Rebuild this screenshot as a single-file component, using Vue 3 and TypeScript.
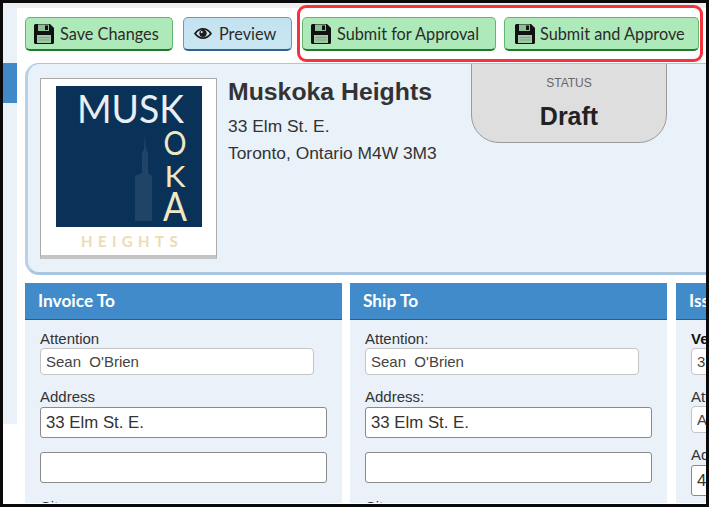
<script setup lang="ts">
const panels = [
  { title: 'Invoice To', attention: 'Attention', address: 'Address', city: 'City:' },
  { title: 'Ship To', attention: 'Attention:', address: 'Address:', city: 'City:' },
]
</script>

<template>
  <div class="frame">
    <div class="strip"></div>
    <div class="main">
      <aside class="side"><div class="side-active"></div></aside>
      <div class="content">
        <div class="toolbar">
          <button class="btn green save">
            <svg class="floppy" viewBox="0 0 22 22"><path d="M1 2.500A1.500 1.500 0 0 1 2.500 1H17l4 4v14.500a1.500 1.500 0 0 1-1.500 1.500H2.500A1.500 1.500 0 0 1 1 19.500Z" fill="#111"/><rect x="5" y="1.500" width="11" height="6.500" fill="#8fbf96"/><rect x="12" y="2.500" width="3" height="4.500" fill="#111"/><rect x="4" y="12" width="14" height="8" fill="#9fc9a5"/><path d="M5.500 14.500h11M5.500 17h11" stroke="#7ea686"/></svg>
            Save Changes
          </button>
          <button class="btn blue preview">
            <svg class="eye" viewBox="0 0 22 14"><path d="M1 7C4 2.800 7.500 1 11 1s7 1.800 10 6c-3 4.200-6.500 6-10 6S4 11.200 1 7Z" fill="#1d1d1d"/><path d="M3.500 7C5.500 4.500 7.500 3.300 9 2.900a5 5 0 0 0 4 0c1.700.500 3.700 1.600 5.500 4.100-2.200 2.700-4.700 4.200-7.500 4.200S5.700 9.700 3.500 7Z" fill="#cfe6f1"/><circle cx="11" cy="6.800" r="4" fill="#1d1d1d"/><circle cx="9.600" cy="5.400" r="1.200" fill="#cfe6f1"/></svg>
            Preview
          </button>
          <div class="highlight">
            <button class="btn green submit">
              <svg class="floppy" viewBox="0 0 22 22"><path d="M1 2.500A1.500 1.500 0 0 1 2.500 1H17l4 4v14.500a1.500 1.500 0 0 1-1.500 1.500H2.500A1.500 1.500 0 0 1 1 19.500Z" fill="#111"/><rect x="5" y="1.500" width="11" height="6.500" fill="#8fbf96"/><rect x="12" y="2.500" width="3" height="4.500" fill="#111"/><rect x="4" y="12" width="14" height="8" fill="#9fc9a5"/><path d="M5.500 14.500h11M5.500 17h11" stroke="#7ea686"/></svg>
              Submit for Approval
            </button>
            <button class="btn green approve">
              <svg class="floppy" viewBox="0 0 22 22"><path d="M1 2.500A1.500 1.500 0 0 1 2.500 1H17l4 4v14.500a1.500 1.500 0 0 1-1.500 1.500H2.500A1.500 1.500 0 0 1 1 19.500Z" fill="#111"/><rect x="5" y="1.500" width="11" height="6.500" fill="#8fbf96"/><rect x="12" y="2.500" width="3" height="4.500" fill="#111"/><rect x="4" y="12" width="14" height="8" fill="#9fc9a5"/><path d="M5.500 14.500h11M5.500 17h11" stroke="#7ea686"/></svg>
              Submit and Approve
            </button>
          </div>
        </div>

        <section class="card">
          <div class="logo-box">
            <svg class="logo" viewBox="0 0 175 175">
              <rect x="15" y="7" width="146" height="141" fill="#0a3157"/>
              <path d="M94 142V97l7-3V74l2-4 1-16 1 16 2 4v20l4 3v45Z" fill="#1f4468"/>
              <text x="36" y="44" class="musk" textLength="107" lengthAdjust="spacingAndGlyphs">MUSK</text>
              <text x="134" y="76" class="oka o" textLength="23" lengthAdjust="spacingAndGlyphs">O</text>
              <text x="134" y="108" class="oka k" textLength="21" lengthAdjust="spacingAndGlyphs">K</text>
              <text x="134" y="142" class="oka a" textLength="24" lengthAdjust="spacingAndGlyphs">A</text>
              <text x="91" y="168" class="heights">HEIGHTS</text>
            </svg>
          </div>
          <div class="info">
            <h1>Muskoka Heights</h1>
            <p>33 Elm St. E.</p>
            <p>Toronto, Ontario M4W 3M3</p>
          </div>
          <div class="status">
            <span>STATUS</span>
            <strong>Draft</strong>
          </div>
        </section>

        <div class="panels">
          <section v-for="p in panels" :key="p.title" class="panel">
            <h2>{{ p.title }}</h2>
            <div class="fields">
              <label>{{ p.attention }}</label>
              <input class="small" value="Sean  O'Brien" />
              <label class="gap">{{ p.address }}</label>
              <input class="big" value="33 Elm St. E." />
              <input class="big second" value="" />
              <label class="city">{{ p.city }}</label>
            </div>
          </section>
          <section class="panel issue">
            <h2>Issue</h2>
            <div class="fields">
              <label class="strong">Vendor</label>
              <input class="small" value="3" />
              <label class="gap">Attention</label>
              <input class="small" value="A" />
              <label class="gap">Address</label>
              <input class="big" value="4" />
            </div>
          </section>
        </div>
      </div>
    </div>
  </div>
</template>

<style>
html, body { margin: 0; background: #000; overflow: hidden; }
</style>

<style scoped>
.frame {
  box-sizing: border-box;
  width: 709px;
  height: 507px;
  border: 3px solid #0a0a0a;
  background: #fff;
  overflow: hidden;
  font-family: "Liberation Sans", Arial, sans-serif;
  color: #333;
}
.strip { height: 5px; background: #eeeeee; }
.main { display: flex; height: 496px; }
.side { width: 14px; flex: none; height: 416px; background: #eaf1f8; padding-top: 55px; box-sizing: border-box; }
.side-active { height: 40px; background: #4188c9; }
.content { margin-left: 8px; width: 690px; flex: none; }
.toolbar { display: flex; align-items: flex-start; height: 55px; }
.btn {
  box-sizing: border-box;
  height: 34px;
  margin-top: 9px;
  border-radius: 5px;
  display: flex;
  align-items: center;
  font-family: Lato, sans-serif;
  font-size: 16.300px;
  color: #2b2b2b;
  padding: 0 0 0 7px;
  white-space: nowrap;
  cursor: pointer;
}
.green { background: #aeeab9; border: 1px solid #62b56f; border-bottom: 2px solid #1f7a2b; }
.blue { background: linear-gradient(#c3e2f0, #cae6f2); border: 1px solid #6f97b8; border-bottom: 2px solid #33608f; }
.floppy { width: 22px; height: 22px; margin-right: 5px; flex: none; }
.eye { width: 20px; height: 13px; margin-right: 6px; flex: none; }
.save { width: 148px; }
.preview { width: 109px; margin-left: 10px; padding-left: 9px; }
.highlight {
  box-sizing: border-box;
  display: flex;
  gap: 8px;
  width: 406px;
  height: 57px;
  margin-left: 5px;
  margin-top: -3px;
  padding: 0 0 0 2px;
  border: 3px solid #f4333f;
  border-radius: 9px;
  background: #fff;
  position: relative;
  z-index: 1;
}
.submit { width: 194px; }
.approve { width: 195px; padding-left: 9px; }
.approve .floppy { margin-right: 4px; }

.card {
  box-sizing: border-box;
  display: flex;
  width: 700px;
  height: 212px;
  padding: 14px 0 0 12px;
  background: #e9f1f9;
  border: 1px solid #a9c6e0;
  border-bottom: 3px solid #a9c6e0;
  border-left: 3px solid #b9d1e7;
  border-radius: 14px 0 0 14px;
  overflow: hidden;
}
.logo-box {
  box-sizing: border-box;
  width: 177px;
  height: 181px;
  background: #fff;
  border: 1px solid #aaa;
  border-bottom: 4px solid #c4c4c4;
  flex: none;
}
.logo { display: block; width: 175px; height: 175px; }
.musk { font: 400 39px Lato, sans-serif; fill: #e8eef2; }
.oka { font: 400 32px Lato, sans-serif; fill: #f0e8c4; text-anchor: middle; }
.oka.k { font-size: 29px; }
.oka.a { font-size: 40px; }
.heights { font: 700 15px Lato, sans-serif; fill: #ecdcb4; text-anchor: middle; letter-spacing: 5.400px; }
.info { margin-left: 11px; width: 243px; flex: none; }
.info h1 { margin: -1px 0 6px; font-size: 24.800px; line-height: 30px; font-weight: 700; color: #333; }
.info p { margin: 0; font-size: 17.400px; line-height: 26.500px; color: #333; }
.status {
  box-sizing: border-box;
  flex: none;
  width: 196px;
  height: 100px;
  margin-top: -35px;
  background: #dedede;
  border: 1px solid #9a9a9a;
  border-radius: 0 0 28px 28px;
  display: flex;
  flex-direction: column;
  align-items: center;
  padding-top: 32px;
}
.status span { font-size: 12px; line-height: 14px; color: #666; }
.status strong { font-size: 25px; line-height: 30px; margin-top: 11px; color: #222; }

.panels { display: flex; gap: 8px; margin-top: 8px; width: 720px; }
.panel { width: 317px; flex: none; height: 220px; background: #eaf1f8; overflow: hidden; }
.panel.issue { width: 100px; margin-left: 1px; }
.panel h2 {
  box-sizing: border-box;
  margin: 0;
  height: 37px;
  background: #428bca;
  border-bottom: 1px solid #245f93;
  color: #fff;
  font: 700 17.300px/36px Lato, sans-serif;
  padding-left: 13px;
}
.fields { display: flex; flex-direction: column; align-items: flex-start; padding: 10px 15px 0; }
label { font-size: 15px; line-height: 17px; color: #333; }
label.strong { font-weight: 700; color: #111; }
label.gap { margin-top: 13px; }
input {
  box-sizing: border-box;
  font-family: "Liberation Sans", Arial, sans-serif;
  background: #fff;
  outline: none;
  display: block;
}
.small {
  width: 274px;
  height: 27px;
  margin-top: 1px;
  border: 1px solid #c4c4c4;
  border-radius: 4px;
  font-size: 15px;
  color: #444;
  padding: 0 5px;
}
.big {
  width: 287px;
  height: 31px;
  margin-top: 2px;
  border: 1px solid #8a8a8a;
  border-radius: 3px;
  font-size: 16.800px;
  color: #333;
  padding: 0 5px;
}
.big.second { margin-top: 14px; }
.city { margin-top: 15px; }
</style>
